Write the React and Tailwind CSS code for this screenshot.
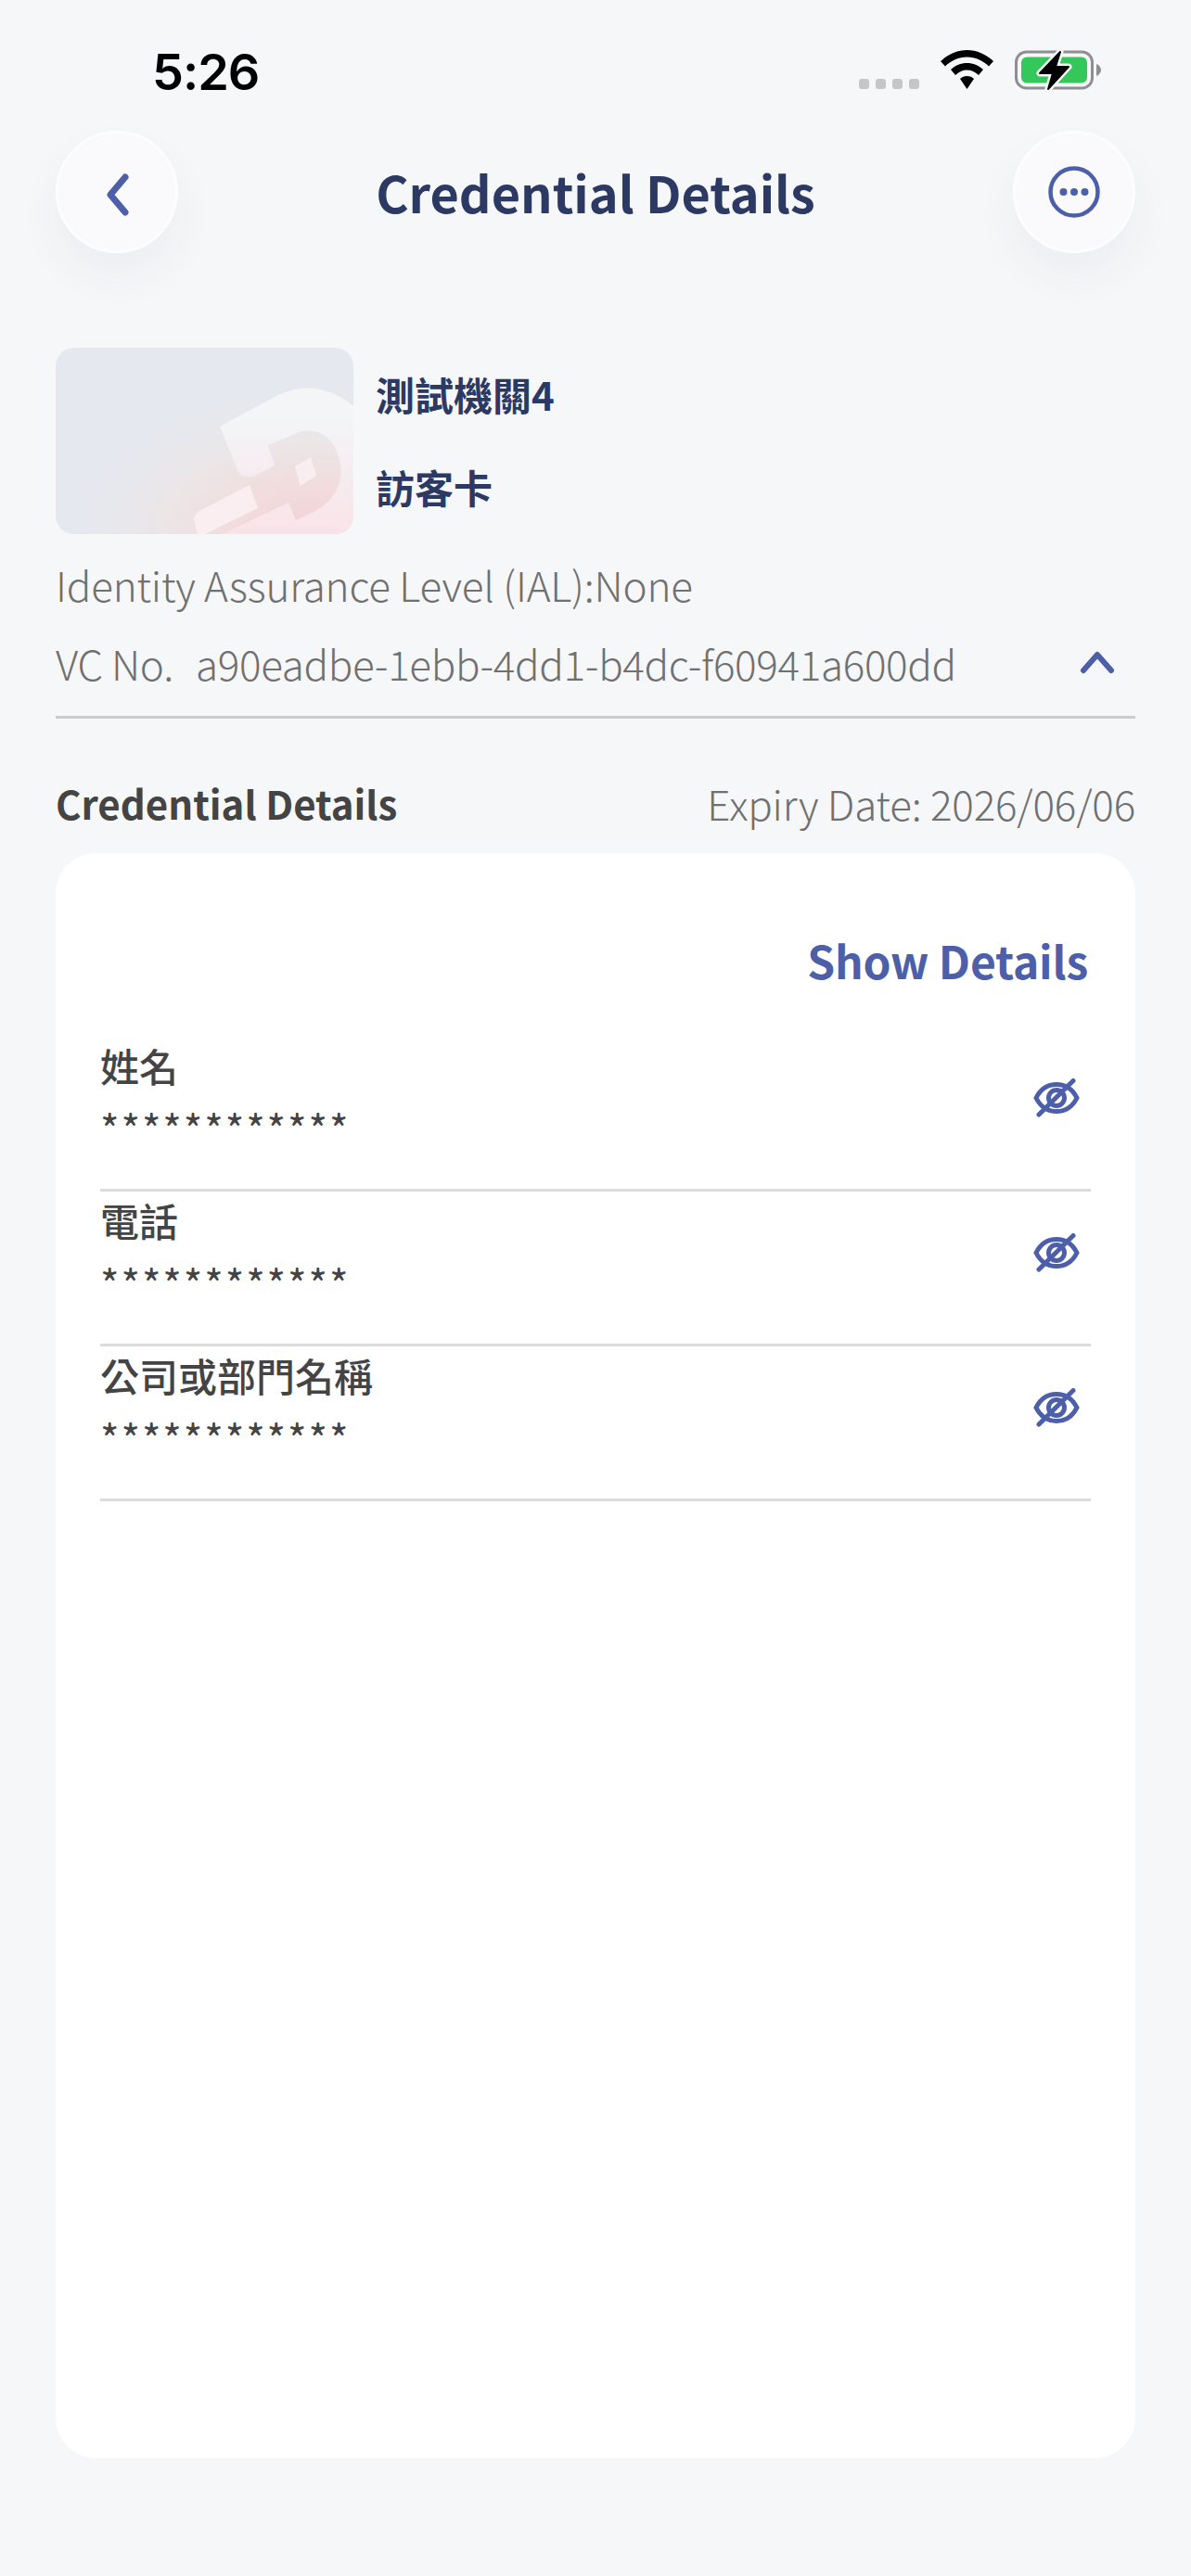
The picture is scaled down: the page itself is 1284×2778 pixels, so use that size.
import { useState } from "react";

const font = { cjk: "font-['Noto_Sans_CJK_TC','Noto_Sans',sans-serif]" };

const fields = ["姓名", "電話", "公司或部門名稱"];

function EyeOff() {
  return (
    <svg width="50" height="42" viewBox="0 0 50 42" fill="none" stroke="#4c5fa8" strokeWidth="5" strokeLinecap="round">
      <path d="M3 21C8 11 16 6.5 25 6.5S42 11 47 21C42 31 34 35.5 25 35.5S8 31 3 21Z" />
      <circle cx="25" cy="21" r="8.5" />
      <path d="M43 2.5L6 39" />
    </svg>
  );
}

function StatusBar() {
  return (
    <div className="flex h-[141px] items-start justify-between pl-[164px] pr-[96px] pt-[44px]">
      <span className="font-['Inter',sans-serif] text-[54px] leading-[68px] font-semibold tracking-[-1px] text-black">5:26</span>
      <div className="flex items-start pt-[10px]">
        <div className="mt-[31px] flex gap-[7px]">
          {[0, 1, 2, 3].map(i => (
            <div key={i} className="h-[11px] w-[11px] rounded-[3px] bg-[#c6c6c8]" />
          ))}
        </div>
        <svg className="ml-[23px]" width="57" height="42" viewBox="0 0 57 42" fill="black">
          <path d="M28.5 0C39 0 49 4.500 57 12L52 17.500C46 11.500 37.500 7.500 28.500 7.500S11 11.500 5 17.500L0 12C8 4.500 18 0 28.500 0Z" />
          <path d="M28.500 14C35 14 41 16.500 46 21L41 27C37.500 23.500 33 21.500 28.500 21.500S19.500 23.500 16 27L11 21C16 16.500 22 14 28.500 14Z" />
          <path d="M28.500 28C31.500 28 34 29 36 31L28.500 42L21 31C23 29 25.500 28 28.500 28Z" />
        </svg>
        <svg className="ml-[23px]" width="94" height="44" viewBox="0 0 94 44" fill="none">
          <rect x="1.500" y="2" width="82" height="39" rx="11" stroke="#8e8e93" strokeWidth="3" />
          <rect x="7" y="7.500" width="71" height="28" rx="6" fill="#34c759" />
          <path d="M88 15C91 16 93 19 93 21.500S91 27 88 28Z" fill="#8e8e93" />
          <path d="M49 2L27 25H41L36 42L58 18H44Z" fill="black" stroke="#f6f7f9" strokeWidth="7" strokeLinejoin="round" paintOrder="stroke" />
          <path d="M49 2L27 25H41L36 42L58 18H44Z" fill="black" stroke="black" strokeWidth="2" strokeLinejoin="round" />
        </svg>
      </div>
    </div>
  );
}

function Header() {
  return (
    <div className="flex h-[132px] items-center justify-between px-[60px]">
      <button className="flex h-[132px] w-[132px] items-center justify-center rounded-full border-[3px] border-[#fdfdfe] bg-[#fafafd] shadow-[0_24px_48px_rgba(40,50,80,0.05)]">
        <svg className="mt-[5px]" width="30" height="46" viewBox="0 0 30 46" fill="none" stroke="#4c5fa8" strokeWidth="7" strokeLinecap="round" strokeLinejoin="round">
          <path d="M24 4L8 23L24 42" />
        </svg>
      </button>
      <h1 className="text-[54px] leading-[80px] font-bold text-[#2c3963]">Credential Details</h1>
      <button className="flex h-[132px] w-[132px] items-center justify-center rounded-full border-[3px] border-[#fdfdfe] bg-[#fafafd] shadow-[0_24px_48px_rgba(40,50,80,0.05)]">
        <svg width="56" height="56" viewBox="0 0 56 56" fill="none">
          <circle cx="28" cy="28" r="25.500" stroke="#4c5fa8" strokeWidth="4.500" />
          <circle cx="16.500" cy="28" r="4" fill="#4c5fa8" />
          <circle cx="28" cy="28" r="4" fill="#4c5fa8" />
          <circle cx="39.500" cy="28" r="4" fill="#4c5fa8" />
        </svg>
      </button>
    </div>
  );
}

function CardArt() {
  return (
    <div className="relative h-[201px] w-[321px] shrink-0 overflow-hidden rounded-[20px] bg-[radial-gradient(ellipse_80%_80%_at_85%_100%,#f1d0d6_0%,#f2dcdd_32%,#ebe6e7_62%,#e7e8ed_85%,#e6e8f0_100%)]">
      <svg className="absolute inset-0" width="321" height="201" viewBox="0 0 321 201">
        <defs>
          <linearGradient id="art" x1="0" y1="0" x2="0" y2="1">
            <stop offset="0.2" stopColor="#f3f5f7" />
            <stop offset="1" stopColor="#f9e3e8" />
          </linearGradient>
        </defs>
        <path d="M177 85L240 51C268 38 298 43 321 63V201H180L251 167L259 186L282 175C298 165 310 150 307 125C302 98 285 85 262 91L229 105L236 127L215 138C206 142 198 138 196 132Z" fill="url(#art)" />
        <path d="M209 148L218 173L161 201H153L149 185C149 181 152 178 157 175Z" fill="#fbeef0" />
        <path d="M275 118L258 128L264 149L281 138Z" fill="#f8eef0" />
      </svg>
    </div>
  );
}

function FieldRow({ label }) {
  return (
    <div className="flex h-[167px] items-start justify-between border-b-[3px] border-[#dcdcdc] pr-[12px] pt-[5px]">
      <div className="flex flex-col">
        <span className="text-[42px] leading-[52px] font-medium text-[#444444]">{label}</span>
        <span className="mt-[19px] text-[44px] leading-[44px] tracking-[1.9px] text-[#444444]">************</span>
      </div>
      <div className="mt-[40px]">
        <EyeOff />
      </div>
    </div>
  );
}

export default function App() {
  const [open] = useState(true);

  return (
    <div className={`h-[2778px] w-[1284px] overflow-hidden bg-[#f6f7f9] ${font.cjk}`}>
      <StatusBar />
      <Header />

      <div className="px-[60px] pt-[102px]">
        <div className="flex gap-[24px]">
          <CardArt />
          <div className="flex flex-col pt-[20px]">
            <span className="text-[42px] leading-[60px] font-bold text-[#2c3963]">測試機關4</span>
            <span className="mt-[40px] text-[42px] leading-[60px] font-bold text-[#2c3963]">訪客卡</span>
          </div>
        </div>

        <p className="mt-[22px] text-[44px] leading-[64px] font-light tracking-[-0.2px] text-[#707070]">Identity Assurance Level (IAL):None</p>

        <div className="mt-[21px] flex items-center justify-between border-b-[3px] border-[#cccccc] pb-[25px]">
          <div className="flex text-[44px] leading-[64px] font-light tracking-[-0.33px] text-[#707070]">
            <span className="w-[151px]">VC No.</span>
            <span>a90eadbe-1ebb-4dd1-b4dc-f60941a600dd</span>
          </div>
          <svg className="mb-[2px] mr-[22px]" width="38" height="26" viewBox="0 0 38 26" fill="none" stroke="#4c5fa8" strokeWidth="6" strokeLinecap="round" strokeLinejoin="round">
            <path d="M4 22L19 5L34 22" />
          </svg>
        </div>

        <div className="mt-[59px] flex items-center justify-between">
          <span className="text-[42px] leading-[64px] font-bold text-[#444444]">Credential Details</span>
          <span className="text-[44px] leading-[64px] font-light tracking-[-0.2px] text-[#707070]">Expiry Date: 2026/06/06</span>
        </div>

        <div className="mt-[22px] h-[1731px] rounded-[44px] bg-white pl-[48px] pr-[48px] pt-[79px]">
          <div className="pr-[3px] text-right text-[48px] leading-[72px] font-bold tracking-[-0.2px] text-[#4c5fa8]">{open ? "Show Details" : "Hide Details"}</div>
          <div className="mt-[47px] flex flex-col">
            {fields.map(f => (
              <FieldRow key={f} label={f} />
            ))}
          </div>
        </div>
      </div>
    </div>
  );
}
